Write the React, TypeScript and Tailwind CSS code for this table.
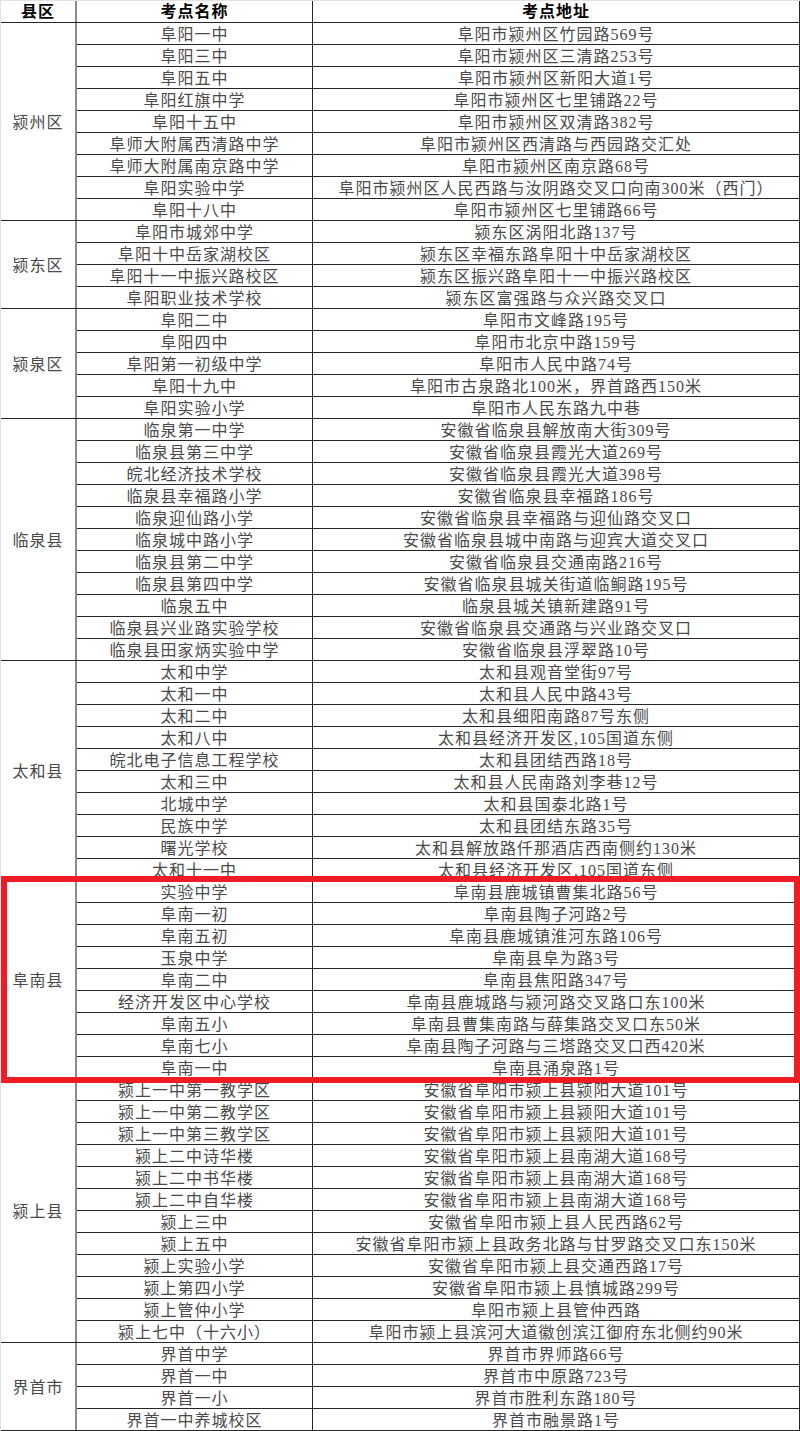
import React from 'react';

type Group = { county: string; rows: [string, string][] };

const groups: Group[] = [
  {
    county: '颍州区',
    rows: [
      ['阜阳一中', '阜阳市颍州区竹园路569号'],
      ['阜阳三中', '阜阳市颍州区三清路253号'],
      ['阜阳五中', '阜阳市颍州区新阳大道1号'],
      ['阜阳红旗中学', '阜阳市颍州区七里铺路22号'],
      ['阜阳十五中', '阜阳市颍州区双清路382号'],
      ['阜师大附属西清路中学', '阜阳市颍州区西清路与西园路交汇处'],
      ['阜师大附属南京路中学', '阜阳市颍州区南京路68号'],
      ['阜阳实验中学', '阜阳市颍州区人民西路与汝阴路交叉口向南300米（西门）'],
      ['阜阳十八中', '阜阳市颍州区七里铺路66号'],
    ],
  },
  {
    county: '颍东区',
    rows: [
      ['阜阳市城郊中学', '颍东区涡阳北路137号'],
      ['阜阳十中岳家湖校区', '颍东区幸福东路阜阳十中岳家湖校区'],
      ['阜阳十一中振兴路校区', '颍东区振兴路阜阳十一中振兴路校区'],
      ['阜阳职业技术学校', '颍东区富强路与众兴路交叉口'],
    ],
  },
  {
    county: '颍泉区',
    rows: [
      ['阜阳二中', '阜阳市文峰路195号'],
      ['阜阳四中', '阜阳市北京中路159号'],
      ['阜阳第一初级中学', '阜阳市人民中路74号'],
      ['阜阳十九中', '阜阳市古泉路北100米，界首路西150米'],
      ['阜阳实验小学', '阜阳市人民东路九中巷'],
    ],
  },
  {
    county: '临泉县',
    rows: [
      ['临泉第一中学', '安徽省临泉县解放南大街309号'],
      ['临泉县第三中学', '安徽省临泉县霞光大道269号'],
      ['皖北经济技术学校', '安徽省临泉县霞光大道398号'],
      ['临泉县幸福路小学', '安徽省临泉县幸福路186号'],
      ['临泉迎仙路小学', '安徽省临泉县幸福路与迎仙路交叉口'],
      ['临泉城中路小学', '安徽省临泉县城中南路与迎宾大道交叉口'],
      ['临泉县第二中学', '安徽省临泉县交通南路216号'],
      ['临泉县第四中学', '安徽省临泉县城关街道临鲖路195号'],
      ['临泉五中', '临泉县城关镇新建路91号'],
      ['临泉县兴业路实验学校', '安徽省临泉县交通路与兴业路交叉口'],
      ['临泉县田家炳实验中学', '安徽省临泉县浮翠路10号'],
    ],
  },
  {
    county: '太和县',
    rows: [
      ['太和中学', '太和县观音堂街97号'],
      ['太和一中', '太和县人民中路43号'],
      ['太和二中', '太和县细阳南路87号东侧'],
      ['太和八中', '太和县经济开发区,105国道东侧'],
      ['皖北电子信息工程学校', '太和县团结西路18号'],
      ['太和三中', '太和县人民南路刘李巷12号'],
      ['北城中学', '太和县国泰北路1号'],
      ['民族中学', '太和县团结东路35号'],
      ['曙光学校', '太和县解放路仟那酒店西南侧约130米'],
      ['太和十一中', '太和县经济开发区,105国道东侧'],
    ],
  },
  {
    county: '阜南县',
    rows: [
      ['实验中学', '阜南县鹿城镇曹集北路56号'],
      ['阜南一初', '阜南县陶子河路2号'],
      ['阜南五初', '阜南县鹿城镇淮河东路106号'],
      ['玉泉中学', '阜南县阜为路3号'],
      ['阜南二中', '阜南县焦阳路347号'],
      ['经济开发区中心学校', '阜南县鹿城路与颍河路交叉路口东100米'],
      ['阜南五小', '阜南县曹集南路与薛集路交叉口东50米'],
      ['阜南七小', '阜南县陶子河路与三塔路交叉口西420米'],
      ['阜南一中', '阜南县涌泉路1号'],
    ],
  },
  {
    county: '颍上县',
    rows: [
      ['颍上一中第一教学区', '安徽省阜阳市颍上县颍阳大道101号'],
      ['颍上一中第二教学区', '安徽省阜阳市颍上县颍阳大道101号'],
      ['颍上一中第三教学区', '安徽省阜阳市颍上县颍阳大道101号'],
      ['颍上二中诗华楼', '安徽省阜阳市颍上县南湖大道168号'],
      ['颍上二中书华楼', '安徽省阜阳市颍上县南湖大道168号'],
      ['颍上二中自华楼', '安徽省阜阳市颍上县南湖大道168号'],
      ['颍上三中', '安徽省阜阳市颍上县人民西路62号'],
      ['颍上五中', '安徽省阜阳市颍上县政务北路与甘罗路交叉口东150米'],
      ['颍上实验小学', '安徽省阜阳市颍上县交通西路17号'],
      ['颍上第四小学', '安徽省阜阳市颍上县慎城路299号'],
      ['颍上管仲小学', '阜阳市颍上县管仲西路'],
      ['颍上七中（十六小）', '阜阳市颍上县滨河大道徽创滨江御府东北侧约90米'],
    ],
  },
  {
    county: '界首市',
    rows: [
      ['界首中学', '界首市界师路66号'],
      ['界首一中', '界首市中原路723号'],
      ['界首一小', '界首市胜利东路180号'],
      ['界首一中养城校区', '界首市融景路1号'],
    ],
  },
];

const font = "font-['Liberation_Serif','Noto_Sans_CJK_SC',serif]";

export default function App() {
  return (
    <div className={`relative w-[800px] bg-white ${font} text-[16px] tracking-[1px]`}>
      <div className="border-t border-l border-[#e2e2e2]">
        {/* 表头 */}
        <div className="flex h-[22px] border-b border-b-[#262626] font-bold text-black">
          <div className="w-[76px] border-r-2 border-r-[#8c8c8c] pt-[2px] text-center leading-[18px]">县区</div>
          <div className="w-[236px] border-r border-r-[#262626] pt-[2px] text-center leading-[18px]">考点名称</div>
          <div className="w-[487px] border-r border-r-[#262626] pt-[2px] text-center leading-[18px]">考点地址</div>
        </div>

        {groups.map((g) => (
          <div key={g.county} className="flex border-b border-b-[#262626] text-[#4a4a4a]">
            <div className="flex w-[76px] items-center justify-center border-r-2 border-r-[#8c8c8c] pt-[3px]">
              {g.county}
            </div>
            <div className="flex flex-col">
              {g.rows.map(([name, addr], i) => (
                <div
                  key={name}
                  className={i < g.rows.length - 1 ? 'flex h-[22px] border-b border-b-[#262626]' : 'flex h-[21px]'}
                >
                  <div className="w-[236px] whitespace-nowrap border-r border-r-[#262626] pt-[3px] text-center leading-[18px]">
                    {name}
                  </div>
                  <div className="w-[487px] whitespace-nowrap border-r border-r-[#262626] pt-[3px] text-center leading-[18px]">
                    {addr}
                  </div>
                </div>
              ))}
            </div>
          </div>
        ))}
      </div>

      {/* 红色标注框 */}
      <div className="pointer-events-none absolute left-[1px] top-[876px] h-[207px] w-[799px] border-[6px] border-[#ee1c25]" />
    </div>
  );
}
